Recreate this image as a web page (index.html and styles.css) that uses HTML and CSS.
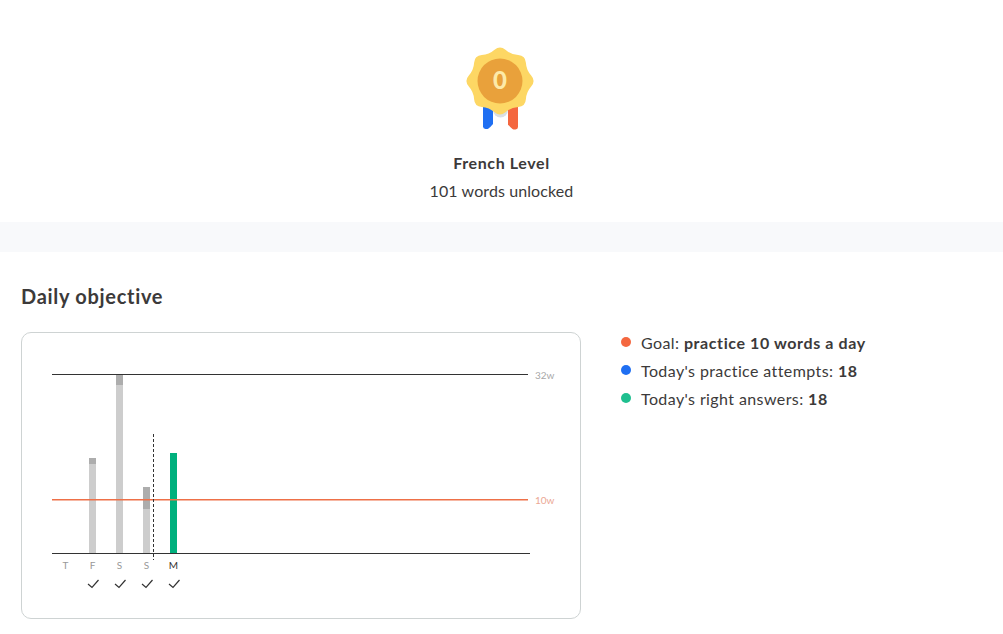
FILE: index.html
```html
<!DOCTYPE html>
<html lang="en">
<head>
    <meta charset="UTF-8">
    <meta name="viewport" content="width=device-width, initial-scale=1.0">
    <title>French Level</title>
    <link rel="stylesheet" href="styles.css">
</head>
<body>
    <div class="level-header">
        <svg class="medal" width="72" height="90" viewBox="-36 -36 72 90">
            <path d="M-17 26 h10 v17 q-2.500 3 -4.500 4.500 q-1 0.700 -3 0.500 q-2.500 -0.500 -2.500 -2.500 z" fill="#1f6ff2"/>
            <path d="M8 26 h10 v20 q0 2 -2.500 2.500 q-2 0.200 -3 -0.500 q-2 -1.500 -4.500 -4.500 z" fill="#f4673f"/>
            <circle cx="0.500" cy="29" r="7.500" fill="#d9dfe5"/>
            <path d="M-5.450 -31.170 Q0 -36 5.450 -31.170 Q10.910 -26.330 18.180 -25.890 Q25.460 -25.460 25.890 -18.180 Q26.330 -10.910 31.170 -5.450 Q36 0 31.170 5.450 Q26.330 10.910 25.890 18.180 Q25.460 25.460 18.180 25.890 Q10.910 26.330 5.450 31.170 Q0 36 -5.450 31.170 Q-10.910 26.330 -18.180 25.890 Q-25.460 25.460 -25.890 18.180 Q-26.330 10.910 -31.170 5.450 Q-36 0 -31.170 -5.450 Q-26.330 -10.910 -25.890 -18.180 Q-25.460 -25.460 -18.180 -25.890 Q-10.910 -26.330 -5.450 -31.170 Z" fill="#fdd764"/>
            <circle r="22.500" fill="#e9a13b"/>
            <text class="medal-num" y="8" text-anchor="middle">0</text>
        </svg>
        <div class="level-name">French Level</div>
        <div class="level-words">101 words unlocked</div>
    </div>
    <div class="band"></div>
    <div class="objective">
        <h2>Daily objective</h2>
        <div class="objective-row">
            <div class="chart-card">
                <svg class="chart" width="558" height="285" viewBox="22 333 558 285">
                    <line x1="52" y1="374.500" x2="528" y2="374.500" stroke="#333"/>
                    <line x1="52" y1="553.500" x2="530" y2="553.500" stroke="#333"/>

                    <rect class="bar" x="89" y="458" width="7" height="95"/>
                    <rect class="bar-top" x="89" y="458" width="7" height="6"/>
                    <rect class="bar" x="116" y="375" width="7" height="178"/>
                    <rect class="bar-top" x="116" y="375" width="7" height="10"/>
                    <rect class="bar" x="143" y="487" width="7" height="66"/>
                    <rect class="bar-top" x="143" y="487" width="7" height="22"/>
                    <rect x="170" y="453" width="7" height="100" fill="#00b07d"/>

                    <rect x="52" y="499" width="476" height="1.500" fill="#ee7048"/>
                    <line x1="153.500" y1="434" x2="153.500" y2="560" stroke="#333" stroke-dasharray="3 2"/>

                    <text class="unit" x="535" y="379">32w</text>
                    <text class="unit unit-red" x="535" y="504">10w</text>

                    <text class="day" x="65.500" y="569" text-anchor="middle">T</text>
                    <text class="day" x="92.500" y="569" text-anchor="middle">F</text>
                    <text class="day" x="119.500" y="569" text-anchor="middle">S</text>
                    <text class="day" x="146.500" y="569" text-anchor="middle">S</text>
                    <text class="day day-now" x="173.500" y="569" text-anchor="middle">M</text>

                    <path class="check" d="M88 584 l4 3.500 l6.500 -7.500"/>
                    <path class="check" d="M115 584 l4 3.500 l6.500 -7.500"/>
                    <path class="check" d="M142 584 l4 3.500 l6.500 -7.500"/>
                    <path class="check" d="M169 584 l4 3.500 l6.500 -7.500"/>
                </svg>
            </div>
            <ul class="legend">
                <li><span class="dot dot-red"></span>Goal: <b>practice 10 words a day</b></li>
                <li><span class="dot dot-blue"></span>Today's practice attempts: <b>18</b></li>
                <li><span class="dot dot-green"></span>Today's right answers: <b>18</b></li>
            </ul>
        </div>
    </div>
</body>
</html>
```

FILE: styles.css
```css
* {
    margin: 0;
    padding: 0;
    box-sizing: border-box;
}

body {
    font-family: 'Lato', sans-serif;
    background: white;
    color: #3c3a3a;
    height: 634px;
    overflow: hidden;
}

.level-header {
    height: 222px;
    padding-top: 45px;
    display: flex;
    flex-direction: column;
    align-items: center;
}

.medal {
    display: block;
    margin-left: -3px;
}

.medal-num {
    font-family: 'Lato', sans-serif;
    font-size: 24px;
    font-weight: 900;
    fill: #fdeaa8;
}

.level-name {
    margin-top: 16px;
    font-size: 16px;
    font-weight: 700;
    letter-spacing: 0.6px;
    line-height: 24px;
}

.level-words {
    margin-top: 4px;
    font-size: 16px;
    letter-spacing: 0.1px;
    line-height: 24px;
}

.band {
    height: 30px;
    background: #f8f9fb;
}

.objective {
    padding: 31px 21px 0;
}

h2 {
    font-size: 20px;
    font-weight: 700;
    letter-spacing: 0.7px;
    line-height: 26px;
    margin-bottom: 19px;
}

.objective-row {
    display: flex;
    align-items: flex-start;
    gap: 40px;
}

.chart-card {
    width: 560px;
    height: 287px;
    margin-top: 4px;
    border: 1px solid #ced3d3;
    border-radius: 10px;
}

.chart {
    display: block;
}

.bar {
    fill: #cdcdcd;
}

.bar-top {
    fill: #adadad;
}

.unit {
    font-family: 'Lato', sans-serif;
    font-size: 10px;
    fill: #a8a8a8;
}

.unit-red {
    fill: #eba794;
}

.day {
    font-family: 'Lato', sans-serif;
    font-size: 10px;
    fill: #999;
}

.day-now {
    fill: #333;
}

.check {
    fill: none;
    stroke: #333;
    stroke-width: 1.2;
}

.legend {
    list-style: none;
}

.legend li {
    display: flex;
    align-items: center;
    white-space: pre;
    height: 28px;
    font-size: 16px;
    letter-spacing: 0.4px;
}

.legend b {
    font-weight: 700;
    letter-spacing: 0.6px;
}

.dot {
    width: 10px;
    height: 10px;
    border-radius: 50%;
    margin-right: 10px;
}

.dot-red {
    background: #f4673f;
}

.dot-blue {
    background: #1f6ff2;
}

.dot-green {
    background: #1fbf8f;
}
```
